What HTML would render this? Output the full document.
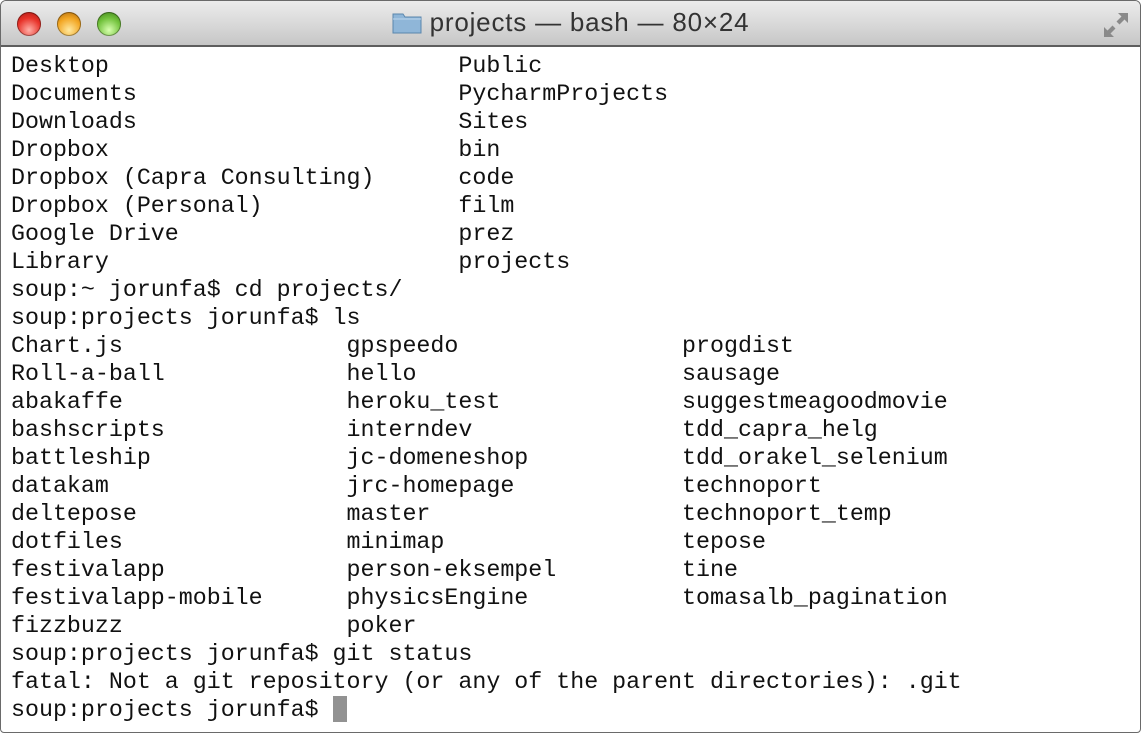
<!DOCTYPE html>
<html><head><style>
html,body{margin:0;padding:0;background:#fff;}
body{width:1141px;height:733px;position:relative;overflow:hidden;}
.win{position:absolute;left:0;top:0;width:1139px;height:731px;border:1px solid #6a6a6a;border-radius:6px 6px 4px 4px;overflow:hidden;background:#fff;}
.tb{position:absolute;left:0;top:0;width:100%;height:44px;background:linear-gradient(#ececec,#d6d6d6 60%,#c6c6c6);border-bottom:2px solid #5e5e5e;}
.dot{position:absolute;top:11px;width:24px;height:24px;border-radius:50%;box-shadow:inset 0 0 0 1px rgba(0,0,0,.35);}
.title{position:absolute;left:0;right:0;top:6px;text-align:center;font:26px "Liberation Sans",sans-serif;letter-spacing:0.8px;color:#333;}
pre{position:absolute;left:10px;top:51px;margin:0;font:23.3px/28px "Liberation Mono",monospace;color:#111;}
.cur{display:inline-block;width:14px;height:26px;background:#929292;vertical-align:-6px;}
</style></head><body><div class="win">
<div class="tb">
<div class="dot" style="left:16px;background:radial-gradient(circle at 50% 75%,#ffb0a8,#e8332a 55%,#a51612)"></div>
<div class="dot" style="left:56px;background:radial-gradient(circle at 50% 75%,#ffe9a0,#f2a623 55%,#a8640a)"></div>
<div class="dot" style="left:96px;background:radial-gradient(circle at 50% 75%,#d8ffb0,#72c23c 55%,#3b7b17)"></div>
<div class="title"><svg width="30" height="24" viewBox="0 0 30 24" style="vertical-align:-3px;margin-right:8px"><path d="M1 4h10l2 3h16v16H1z" fill="#8fb6d8" stroke="#5a86ad"/><path d="M1 9h28" stroke="#bcd6ec"/></svg>projects — bash — 80×24</div>
<svg style="position:absolute;right:10px;top:10px" width="28" height="28" viewBox="0 0 28 28"><path d="M16 2h10v10l-3.5-3.5-5 5-3-3 5-5z M12 26H2V16l3.5 3.5 5-5 3 3-5 5z" fill="#8a8a8a"/></svg>
</div>
<pre>Desktop                         Public
Documents                       PycharmProjects
Downloads                       Sites
Dropbox                         bin
Dropbox (Capra Consulting)      code
Dropbox (Personal)              film
Google Drive                    prez
Library                         projects
soup:~ jorunfa$ cd projects/
soup:projects jorunfa$ ls
Chart.js                gpspeedo                progdist
Roll-a-ball             hello                   sausage
abakaffe                heroku_test             suggestmeagoodmovie
bashscripts             interndev               tdd_capra_helg
battleship              jc-domeneshop           tdd_orakel_selenium
datakam                 jrc-homepage            technoport
deltepose               master                  technoport_temp
dotfiles                minimap                 tepose
festivalapp             person-eksempel         tine
festivalapp-mobile      physicsEngine           tomasalb_pagination
fizzbuzz                poker
soup:projects jorunfa$ git status
fatal: Not a git repository (or any of the parent directories): .git
soup:projects jorunfa$ <span class="cur"></span></pre>
</div></body></html>
